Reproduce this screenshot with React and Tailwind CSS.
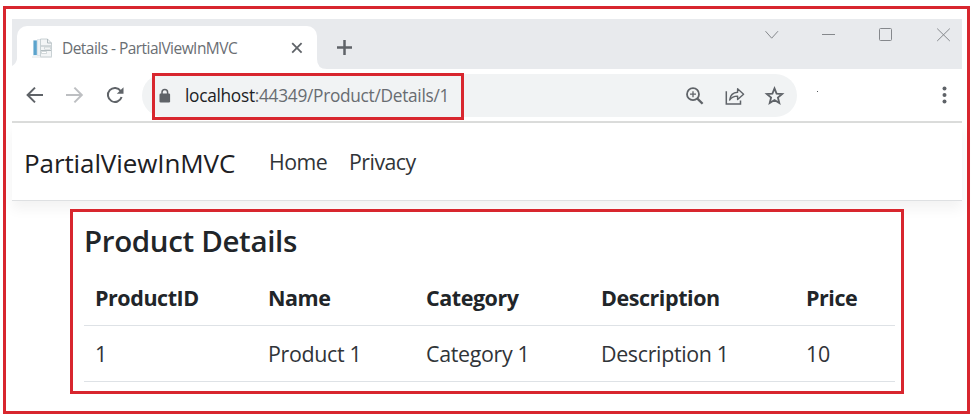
const rows = [
  { id: '1', name: 'Product 1', category: 'Category 1', description: 'Description 1', price: '10' },
];

function TabStrip() {
  return (
    <div className="flex h-[50px] bg-[#e8eaed]">
      <div className="relative ml-[5px] mt-[7px] flex h-[43px] w-[300px] items-center rounded-t-[10px] bg-white">
        <svg className="absolute bottom-0 -left-[5px]" width="5" height="10" viewBox="0 0 5 10">
          <path d="M5 0V10H0V7Q4 5 5 0Z" fill="#fff" />
        </svg>
        <svg className="absolute bottom-0 -right-[10px]" width="10" height="10" viewBox="0 0 10 10">
          <path d="M0 0Q0 10 10 10H0Z" fill="#fff" />
        </svg>
        <svg className="ml-[15px] shrink-0" width="21" height="20" viewBox="0 0 21 20">
          <path d="M1 2h5v16H1z" fill="#e6f1f7" />
          <path d="M1.5 2.5h3.3v14.5H1.5z" fill="#5ba3cc" />
          <path d="M5.5 1.5h8v16h-8z" fill="#edf2f5" stroke="#d5dde2" strokeWidth=".7" />
          <path d="M8.5 1h7l4 4v14h-11z" fill="#f3f5f6" stroke="#bcc6ca" strokeWidth=".8" />
          <path d="M15.5 1v4h4M9 8h10M9 12.5h10" fill="none" stroke="#aab5ba" strokeWidth=".9" />
          <path d="M12.5 9.2h6v2h-6zM9.5 13.5h5v2h-5z" fill="#fff" stroke="#b9c2c6" strokeWidth=".6" />
          <path d="M0 19h20" stroke="#d8dddf" strokeWidth=".8" />
        </svg>
        <span className="ml-[9px] w-[180px] whitespace-nowrap text-[15.5px] leading-[24px] tracking-[-0.54px] text-[#6a6e73]">
          Details - PartialViewInMVC
        </span>
        <svg className="ml-[49px] shrink-0" width="12" height="12" viewBox="0 0 12 12">
          <path d="M1.2 1.2 10.6 10.6M10.6 1.2 1.2 10.6" stroke="#5f6368" strokeWidth="1.8" />
        </svg>
      </div>
      <svg className="ml-[20px] mt-[21px]" width="15" height="15" viewBox="0 0 15 15">
        <path d="M7.5 0V15M0 7.5H15" stroke="#5f6368" strokeWidth="2.5" />
      </svg>
      <svg className="ml-auto mr-[11px] mt-[7px]" width="187" height="18" viewBox="0 0 187 18" fill="none" stroke="#85888c" strokeWidth="1">
        <path d="M1.5 5.2 7.7 12.2 14 5.2" />
        <path d="M58 8.5H71" />
        <rect x="115.5" y="2.5" width="12" height="12" rx="1" />
        <path d="M173.2 2.6 185.8 15M185.8 2.6 173.2 15" />
      </svg>
    </div>
  );
}

function Toolbar() {
  return (
    <div className="flex h-[54px] items-center border-b-2 border-[#dbdcdb]">
      <svg className="ml-[14px]" width="100" height="20" viewBox="0 0 100 20" fill="none" strokeWidth="2">
        <path d="M17 10H1.8M9 2.6 1.6 10 9 17.4" stroke="#5f6368" />
        <path d="M40 10H55.4M48.4 2.6 55.8 10 48.4 17.4" stroke="#bdbfc2" />
        <path d="M94.7 6A7 7 0 1 0 95.6 12" stroke="#5f6368" />
        <path d="M97.5 2.2V8.8H90.8Z" fill="#5f6368" />
      </svg>
      <div className="relative ml-[16px] mt-px flex h-[43px] w-[655px] items-center rounded-full bg-[#f1f3f4]">
        <div className="absolute -top-px left-[10px] h-[47px] w-[312px] border-3 border-[#d8262e]" />
        <svg className="ml-[17px] shrink-0" width="12" height="16" viewBox="0 0 12 16">
          <rect x=".5" y="5.5" width="10.6" height="9" rx="1.2" fill="#5f6368" />
          <path d="M3 6V4.2a2.8 2.8 0 0 1 5.6 0V6" fill="none" stroke="#5f6368" strokeWidth="1.5" />
        </svg>
        <span className="ml-[14px] mt-px w-[480px] whitespace-nowrap text-[17.3px] leading-[26px] tracking-[-0.29px] text-[#686c71]">
          <span className="text-[#202124]">localhost</span>:44349/Product/Details/1
        </span>
        <svg className="ml-[20px] shrink-0" width="100" height="20" viewBox="0 0 100 20" fill="none" stroke="#5f6368">
          <circle cx="8" cy="8.2" r="6" strokeWidth="1.8" />
          <path d="M8 5.2V11.2M5 8.2H11" strokeWidth="1.3" />
          <path d="M12.4 12.6 17.6 17.8" strokeWidth="2.3" />
          <path d="M41.3 5.2V18H55.5V14.6" strokeWidth="1.5" />
          <path d="M44.6 14C45.3 9 48 6.5 52.6 6.3V2.8L58.6 8.2 52.6 13.6V10.1C49 10 46.8 11 44.6 14Z" strokeWidth="1.4" strokeLinejoin="round" />
          <path d="M89.5 2.4 91.6 7.6 97.2 8 92.9 11.6 94.3 17 89.5 14.1 84.7 17 86.1 11.6 81.8 8 87.4 7.6Z" strokeWidth="1.8" />
        </svg>
      </div>
      <span className="mb-[8px] ml-[20px] size-px bg-[#55585c]" />
      <svg className="ml-auto mr-[15px]" width="5" height="18" viewBox="0 0 5 18" fill="#5f6368">
        <circle cx="2.5" cy="2.6" r="2" />
        <circle cx="2.5" cy="9" r="2" />
        <circle cx="2.5" cy="15.4" r="2" />
      </svg>
    </div>
  );
}

function SiteNav() {
  return (
    <nav className="flex h-[78px] items-center border-b border-[#dee0e2] pl-[12px] pt-[2px] text-[#303438] shadow-[0_8px_12px_rgba(0,0,0,0.05)]">
      <span className="w-[245px] whitespace-nowrap text-[26px] leading-[36px] tracking-[-0.1px] text-[#1d2023]">PartialViewInMVC</span>
      <span className="mb-[2px] w-[80px] text-[21.3px] leading-[32px] tracking-[-0.5px]">Home</span>
      <span className="mb-[2px] text-[21.3px] leading-[32px] tracking-[-0.5px]">Privacy</span>
    </nav>
  );
}

function ProductDetails() {
  return (
    <section className="ml-[58px] mt-[8px] h-[185px] w-[834px] border-3 border-[#d8262e] bg-white pl-[11px]">
      <h4 className="mt-[9px] h-[40px] text-[29.5px] font-semibold leading-[40px] tracking-[-0.35px] text-[#212529]">Product Details</h4>
      <table className="mt-[8px] w-[811px] table-fixed border-collapse text-left text-[21.5px] leading-[30px] text-[#303438]">
        <colgroup>
          <col className="w-[173px]" />
          <col className="w-[158px]" />
          <col className="w-[175px]" />
          <col className="w-[205px]" />
          <col />
        </colgroup>
        <thead>
          <tr className="h-[56px] border-b border-[#dee2e6] font-bold tracking-[-0.45px] text-[#212529]">
            <th className="pl-[11px] pt-[2px]">ProductID</th>
            <th className="pl-[11px] pt-[2px]">Name</th>
            <th className="pl-[11px] pt-[2px]">Category</th>
            <th className="pl-[11px] pt-[2px]">Description</th>
            <th className="pl-[11px] pt-[2px]">Price</th>
          </tr>
        </thead>
        <tbody>
          {rows.map((r) => (
            <tr key={r.id} className="h-[56px] border-b border-[#dee2e6] text-[21.4px] tracking-[-0.33px]">
              <td className="pl-[11px] pt-[2px]">{r.id}</td>
              <td className="pl-[11px] pt-[2px]">{r.name}</td>
              <td className="pl-[11px] pt-[2px]">{r.category}</td>
              <td className="pl-[11px] pt-[2px]">{r.description}</td>
              <td className="pl-[11px] pt-[2px]">{r.price}</td>
            </tr>
          ))}
        </tbody>
      </table>
    </section>
  );
}

export default function App() {
  return (
    <div className="h-[416px] w-[973px] overflow-hidden bg-white pl-[3px] pt-[6px] font-['Open_Sans','Noto_Sans',sans-serif]">
      <div className="h-[408px] w-[967px] border-3 border-[#d8262e] pl-[6px] pr-[5px] pt-[10px]">
        <TabStrip />
        <Toolbar />
        <SiteNav />
        <ProductDetails />
      </div>
    </div>
  );
}
